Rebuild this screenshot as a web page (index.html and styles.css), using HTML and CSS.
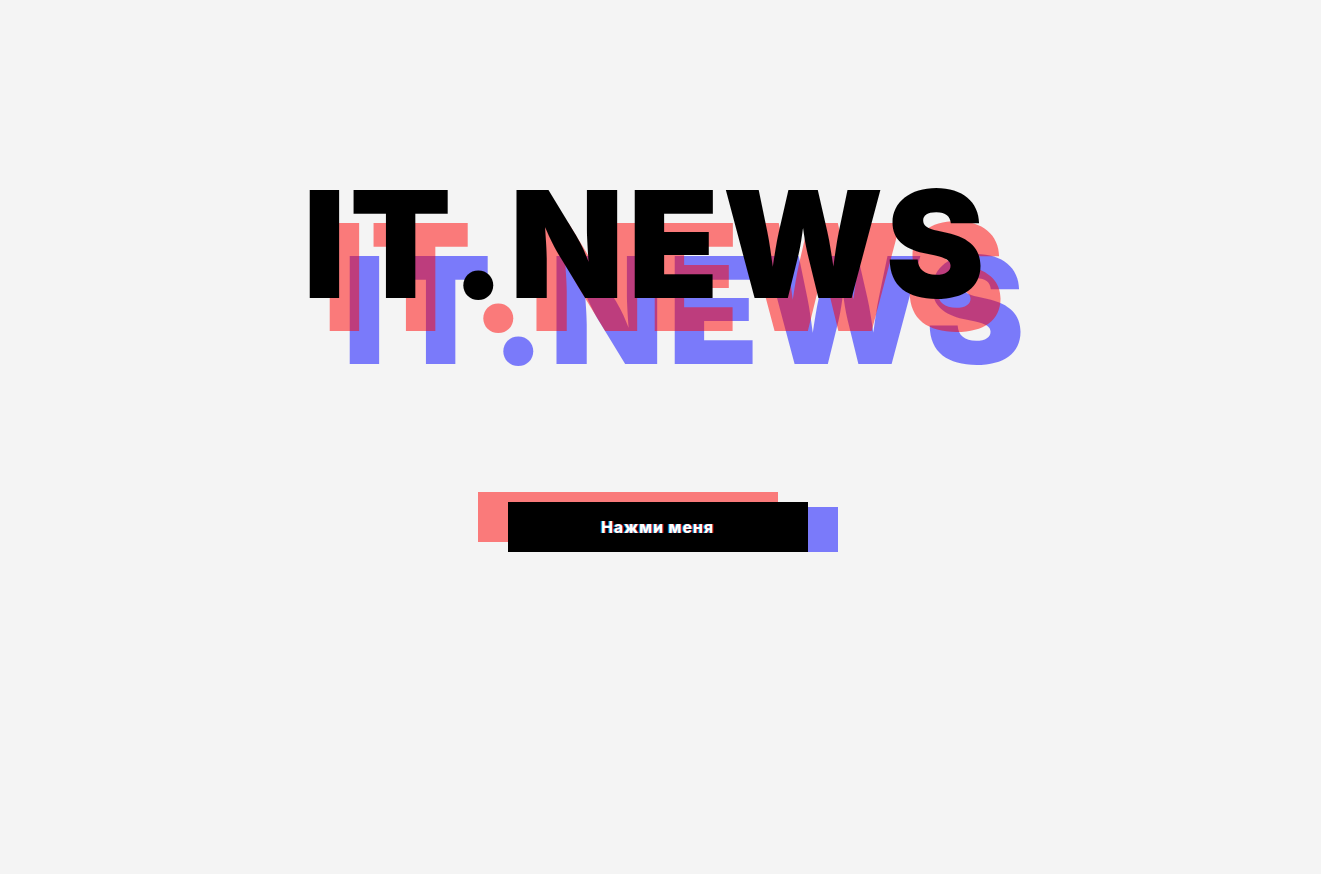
FILE: index.html
```html
<!DOCTYPE html>
<html lang="ru">
<head>
<meta charset="utf-8">
<title>IT.NEWS</title>
<link rel="stylesheet" href="styles.css">
</head>
<body>
<main class="hero">
  <h1 class="logo">IT.NEWS</h1>
  <div class="btn-wrap">
    <button class="btn">Нажми меня</button>
  </div>
</main>
</body>
</html>
```

FILE: styles.css
```css
html, body {
  margin: 0;
  padding: 0;
  background: #f4f4f4;
}
body {
  font-family: Inter, "Noto Sans", sans-serif;
}
.hero {
  display: flex;
  flex-direction: column;
  align-items: center;
  padding-top: 170px;
}
.logo {
  margin: 0 0 0 -30px;
  font-size: 149px;
  font-weight: 900;
  line-height: 1;
  letter-spacing: 3.5px;
  color: #000;
  text-shadow: 20px 33px rgba(255, 0, 0, 0.5), 40px 66px rgba(0, 0, 255, 0.5);
}
.btn-wrap {
  position: relative;
  margin-top: 183px;
  width: 300px;
  height: 50px;
  margin-left: -6px;
}
.btn-wrap::before,
.btn-wrap::after {
  content: "";
  position: absolute;
  width: 300px;
  height: 50px;
}
.btn-wrap::before {
  left: -30px;
  top: -10px;
  background: rgba(255, 0, 0, 0.5);
}
.btn-wrap::after {
  left: 30px;
  top: 5px;
  background: rgba(0, 0, 255, 0.5);
}
.btn {
  position: relative;
  z-index: 1;
  display: block;
  width: 300px;
  height: 50px;
  padding: 0;
  border: 0;
  background: #000;
  color: #fff;
  font-family: Inter, "Noto Sans", sans-serif;
  font-size: 16px;
  font-weight: 800;
  letter-spacing: 0.8px;
  text-shadow: -1px 0 rgba(0, 200, 255, 0.6), 1px 0 rgba(255, 0, 80, 0.6);
  cursor: pointer;
}
```
